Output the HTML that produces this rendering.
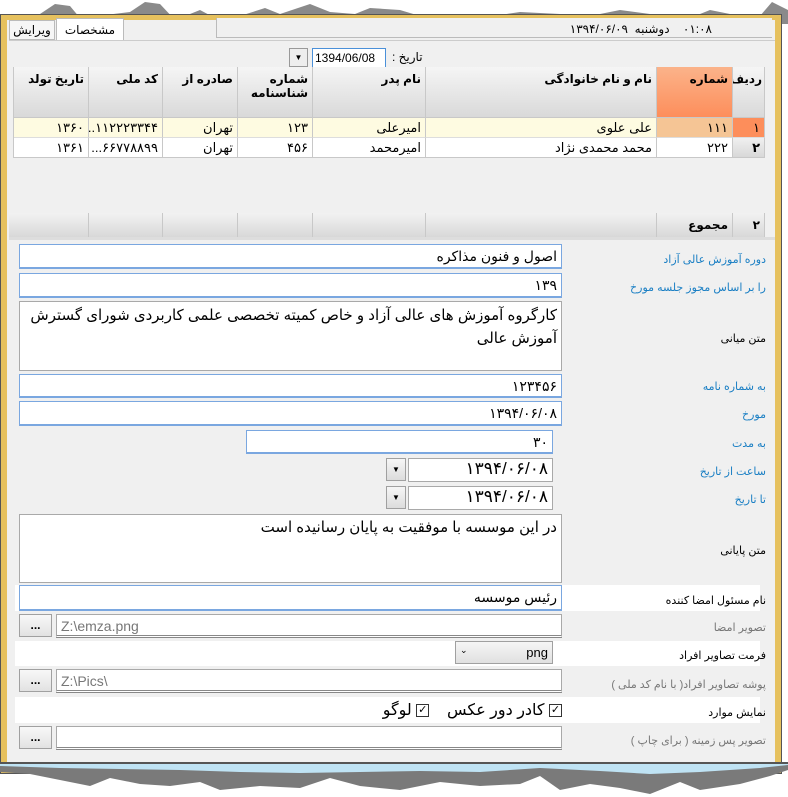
<!DOCTYPE html>
<html><head><meta charset="utf-8"><style>
*{box-sizing:border-box;margin:0;padding:0}
body{width:788px;height:797px;background:#fff;position:relative;overflow:hidden;font-family:"Liberation Sans","DejaVu Sans",sans-serif;font-size:12px;color:#000}
.a{position:absolute}
.win{left:0;top:14px;width:782px;height:760px;background:#e6c15e;border:1px solid #555}
.in{left:7px;top:20px;width:768px;height:750px;background:#f0f0f0}
.cell{position:absolute;border-right:1px solid #c8c8c8;font-size:12px;direction:rtl;padding:0 4px}
.hd{top:67px;height:51px;background:linear-gradient(#f5f5f5,#d9d9d9);font-weight:bold;padding-top:5px;border-bottom:1px solid #c8c8c8}
.r1{top:118px;height:20px;background:#fefbe1;border-bottom:1px solid #ddd;line-height:20px;font-size:13px}
.r2{top:138px;height:20px;background:#fff;border-bottom:1px solid #c8c8c8;line-height:20px;font-size:13px}
.sm{top:213px;height:24px;background:linear-gradient(#f2f2f2,#d8d8d8);line-height:24px;font-weight:bold}
.inp{position:absolute;background:#fff;border:1px solid #a9a9a9;border-bottom:2px solid #6a9fd8;direction:rtl;font-size:14px;padding:3px 4px;font-family:"Liberation Sans","DejaVu Sans",sans-serif}
.blue{border-color:#7aa7e0}
.lbl{position:absolute;right:22px;direction:rtl;font-size:11px;color:#1a7fc4}
.lk{color:#000}.lg{color:#777}
.strip{position:absolute;left:15px;width:745px;background:#fff}
.btn{position:absolute;width:33px;height:23px;border:1px solid #a0a0a0;background:linear-gradient(#f8f8f8,#e2e2e2);font-weight:bold;text-align:center;line-height:20px;font-size:12px}
.dd{position:absolute;width:20px;height:23px;border:1px solid #a0a0a0;background:linear-gradient(#f6f6f6,#dcdcdc);font-size:8px;text-align:center;line-height:22px}
.cb{display:inline-block;width:13px;height:13px;border:1px solid #333;font-size:11px;line-height:11px;text-align:center;background:#fff;vertical-align:middle}
</style></head><body>
<svg class="a" style="left:0;top:0" width="788" height="24"><path d="M0 24 L0 18 L40 14 L55 4 L70 6 L80 18 L130 12 L145 2 L160 4 L175 20 L200 10 L215 18 L240 16 L265 8 L280 14 L310 4 L330 12 L355 14 L370 8 L400 10 L420 16 L450 14 L480 18 L520 12 L560 14 L590 16 L620 10 L650 14 L690 18 L710 10 L730 14 L760 16 L772 2 L788 10 L788 24Z" fill="#8a8a8a"/></svg>
<div class="a win"></div>
<div class="a in"></div>
<div class="a" style="left:9px;top:20px;width:46px;height:20px;background:#f6f6f6;border:1px solid #bbb;font-size:12px;text-align:center;line-height:18px">ویرایش</div>
<div class="a" style="left:56px;top:18px;width:68px;height:22px;background:#fff;border:1px solid #bbb;border-bottom:none;font-size:12px;text-align:center;line-height:22px">مشخصات</div>
<div class="a" style="left:216px;top:18px;width:556px;height:20px;background:#f0f0f0;border-left:1px solid #bbb;border-bottom:1px solid #bbb;direction:rtl;font-size:12px;line-height:22px;padding-right:60px">۰۱:۰۸&nbsp;&nbsp;&nbsp; دوشنبه &nbsp;۱۳۹۴/۰۶/۰۹</div>
<div class="a" style="left:9px;top:40px;width:766px;height:1px;background:#ccc"></div>
<div class="a" style="left:392px;top:50px;font-size:12px;direction:rtl">تاریخ :</div>
<div class="a" style="left:312px;top:48px;width:74px;height:20px;background:#fff;border:1px solid #4a90d9;font-size:12px;padding:2px">1394/06/08</div>
<div class="a" style="left:289px;top:48px;width:19px;height:19px;border:1px solid #999;background:#eee;font-size:8px;text-align:center;line-height:18px">▼</div>
<div class="a" style="left:13px;top:67px;width:752px;height:91px;border-left:1px solid #c8c8c8"></div>
<div class="cell hd" style="left:733px;width:32px;padding:5px 2px 0 0">ردیف</div>
<div class="cell hd" style="left:657px;width:76px;background:linear-gradient(#fbb38a,#fd8e5b)">شماره</div>
<div class="cell hd" style="left:426px;width:231px">نام و نام خانوادگی</div>
<div class="cell hd" style="left:313px;width:113px">نام پدر</div>
<div class="cell hd" style="left:238px;width:75px">شماره شناسنامه</div>
<div class="cell hd" style="left:163px;width:75px">صادره از</div>
<div class="cell hd" style="left:89px;width:74px">کد ملی</div>
<div class="cell hd" style="left:14px;width:75px">تاریخ تولد</div>

<div class="cell r1" style="left:733px;width:32px;background:#fd8e5b">۱</div>
<div class="cell r1" style="left:657px;width:76px;background:#f5c595">۱۱۱</div>
<div class="cell r1" style="left:426px;width:231px">علی علوی</div>
<div class="cell r1" style="left:313px;width:113px">امیرعلی</div>
<div class="cell r1" style="left:238px;width:75px">۱۲۳</div>
<div class="cell r1" style="left:163px;width:75px">تهران</div>
<div class="cell r1" style="left:89px;width:74px">۱۱۲۲۲۳۳۴۴...</div>
<div class="cell r1" style="left:14px;width:75px">۱۳۶۰</div>
<div class="cell r2" style="left:733px;width:32px;background:linear-gradient(#f0f0f0,#d8d8d8);font-weight:bold">۲</div>
<div class="cell r2" style="left:657px;width:76px">۲۲۲</div>
<div class="cell r2" style="left:426px;width:231px">محمد محمدی نژاد</div>
<div class="cell r2" style="left:313px;width:113px">امیرمحمد</div>
<div class="cell r2" style="left:238px;width:75px">۴۵۶</div>
<div class="cell r2" style="left:163px;width:75px">تهران</div>
<div class="cell r2" style="left:89px;width:74px">۶۶۷۷۸۸۹۹...</div>
<div class="cell r2" style="left:14px;width:75px">۱۳۶۱</div>

<div class="cell sm" style="left:733px;width:32px">۲</div>
<div class="cell sm" style="left:657px;width:76px">مجموع</div>
<div class="cell sm" style="left:426px;width:231px"></div>
<div class="cell sm" style="left:313px;width:113px"></div>
<div class="cell sm" style="left:238px;width:75px"></div>
<div class="cell sm" style="left:163px;width:75px"></div>
<div class="cell sm" style="left:89px;width:74px"></div>
<div class="cell sm" style="left:9px;width:80px"></div>
<div class="a" style="left:9px;top:237px;width:766px;height:3px;background:#ddd"></div>

<div class="inp blue" style="left:19px;top:244px;width:543px;height:25px">اصول و فنون مذاکره</div>
<div class="lbl" style="top:253px">دوره آموزش عالی آزاد</div>
<div class="inp blue" style="left:19px;top:273px;width:543px;height:25px">۱۳۹</div>
<div class="lbl" style="top:281px">را بر اساس مجوز جلسه مورخ</div>
<div class="inp" style="left:19px;top:301px;width:543px;height:70px;border-bottom:1px solid #a9a9a9;line-height:23px;font-size:15px;padding:2px 4px">کارگروه آموزش های عالی آزاد و خاص کمیته تخصصی علمی کاربردی شورای گسترش آموزش عالی</div>
<div class="lbl lk" style="top:332px">متن میانی</div>
<div class="inp blue" style="left:19px;top:374px;width:543px;height:24px">۱۲۳۴۵۶</div>
<div class="lbl" style="top:380px">به شماره نامه</div>
<div class="inp blue" style="left:19px;top:401px;width:543px;height:25px">۱۳۹۴/۰۶/۰۸</div>
<div class="lbl" style="top:408px">مورخ</div>
<div class="inp blue" style="left:246px;top:430px;width:307px;height:24px">۳۰</div>
<div class="lbl" style="top:437px">به مدت</div>
<div class="dd" style="left:386px;top:458px">▼</div>
<div class="inp" style="left:408px;top:458px;width:145px;height:24px;border-bottom:1px solid #a9a9a9;font-size:17px;padding-top:0">۱۳۹۴/۰۶/۰۸</div>
<div class="lbl" style="top:465px">ساعت از تاریخ</div>
<div class="dd" style="left:386px;top:486px">▼</div>
<div class="inp" style="left:408px;top:486px;width:145px;height:24px;border-bottom:1px solid #a9a9a9;font-size:17px;padding-top:0">۱۳۹۴/۰۶/۰۸</div>
<div class="lbl" style="top:493px">تا تاریخ</div>
<div class="inp" style="left:19px;top:514px;width:543px;height:69px;border-bottom:1px solid #a9a9a9;font-size:15px">در این موسسه با موفقیت به پایان رسانیده است</div>
<div class="lbl lk" style="top:544px">متن پایانی</div>

<div class="strip" style="top:585px;height:26px"></div>
<div class="inp blue" style="left:19px;top:585px;width:543px;height:26px">رئیس موسسه</div>
<div class="lbl lk" style="top:594px">نام مسئول امضا کننده</div>
<div class="strip" style="top:614px;height:24px;background:#f0f0f0"></div>
<div class="btn" style="left:19px;top:614px">...</div>
<div class="inp" style="left:56px;top:614px;width:506px;height:24px;direction:ltr;color:#777;border-bottom:3px double #888">Z:\emza.png</div>
<div class="lbl lg" style="top:621px">تصویر امضا</div>
<div class="strip" style="top:641px;height:25px"></div>
<div class="a" style="left:455px;top:641px;width:98px;height:23px;border:1px solid #a0a0a0;background:linear-gradient(#f6f6f6,#e0e0e0);font-size:13px;direction:rtl;padding:3px 4px">png<span style="float:left;font-size:9px">⌄</span></div>
<div class="lbl lk" style="top:649px">فرمت تصاویر افراد</div>
<div class="btn" style="left:19px;top:669px">...</div>
<div class="inp" style="left:56px;top:669px;width:506px;height:24px;direction:ltr;color:#777;border-bottom:3px double #888">Z:\Pics\</div>
<div class="lbl lg" style="top:678px">پوشه تصاویر افراد( با نام کد ملی )</div>
<div class="strip" style="top:697px;height:26px"></div>
<div class="a" style="left:290px;top:701px;width:272px;direction:rtl;font-size:16px;line-height:20px"><span class="cb">✓</span> کادر دور عکس &nbsp;&nbsp;&nbsp;<span class="cb">✓</span> لوگو</div>
<div class="lbl lk" style="top:706px">نمایش موارد</div>
<div class="btn" style="left:19px;top:726px">...</div>
<div class="inp" style="left:56px;top:726px;width:506px;height:24px;border-bottom:3px double #888"></div>
<div class="lbl lg" style="top:734px">تصویر پس زمینه ( برای چاپ )</div>

<svg class="a" style="left:0;top:762px" width="788" height="35"><path d="M0 0 L788 0 L788 8 L770 14 L740 22 L700 28 L680 20 L650 32 L620 26 L590 22 L560 28 L540 14 L520 22 L480 24 L440 20 L400 28 L360 24 L330 16 L300 26 L260 24 L220 28 L200 20 L170 24 L140 22 L110 16 L90 24 L60 18 L30 12 L0 10Z" fill="#7a7a7a"/><path d="M0 0 L788 0 L788 3 L760 6 L700 10 L650 12 L600 9 L540 6 L480 10 L420 9 L360 10 L300 11 L240 10 L180 8 L120 7 L60 6 L0 4Z" fill="#bfe3f4"/><path d="M0 0 L788 0 L788 2 L0 2Z" fill="#555"/></svg>
</body></html>
